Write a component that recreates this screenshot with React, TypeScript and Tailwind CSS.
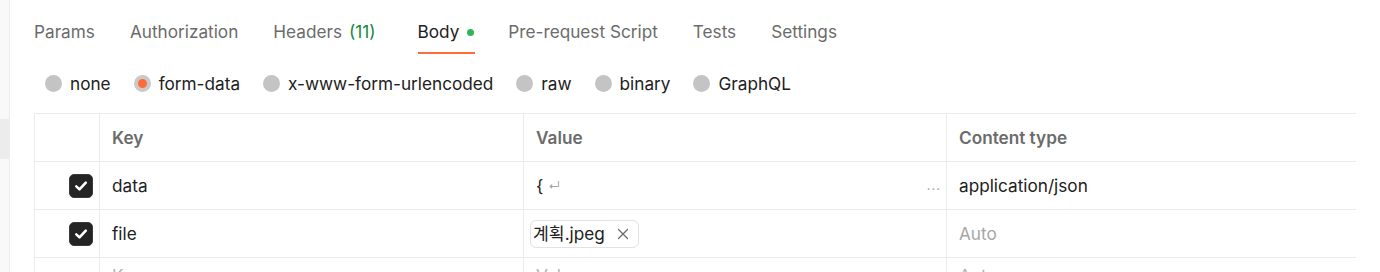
import React from "react";

const tabs = [
  { label: "Params" },
  { label: "Authorization" },
  { label: "Headers", count: "(11)" },
  { label: "Body", active: true },
  { label: "Pre-request Script" },
  { label: "Tests" },
  { label: "Settings" },
];

const radios = [
  { label: "none" },
  { label: "form-data", selected: true },
  { label: "x-www-form-urlencoded" },
  { label: "raw" },
  { label: "binary" },
  { label: "GraphQL" },
];

function Check() {
  return (
    <div className="w-[24px] h-[24px] rounded-[5px] bg-[#242424] border border-[#3a3a3a] flex items-center justify-center">
      <svg width="16" height="16" viewBox="0 0 16 16" fill="none">
        <path d="M3.3 8.4 L6.5 11.4 L12.8 4.7" stroke="white" strokeWidth="2.6" strokeLinecap="round" strokeLinejoin="round" />
      </svg>
    </div>
  );
}

export default function App() {
  const font = { fontFamily: "Inter, 'Noto Sans CJK KR', sans-serif" };
  return (
    <div className="w-[1380px] h-[272px] overflow-hidden bg-white flex text-[17.2px] text-[#212121]" style={font}>
      <div className="w-[10px] shrink-0 bg-[#f9f9f9] border-r border-[#ededed] flex flex-col">
        <div className="h-[119px] shrink-0" />
        <div className="h-[40px] shrink-0 bg-[#ececec]" />
      </div>
      <div className="flex-1 pl-[24px] flex flex-col">
        <div className="flex h-[54px] shrink-0 pt-[20px] gap-[35px]">
          {tabs.map((t) => (
            <div
              key={t.label}
              className={`h-[34px] flex items-start border-b-2 ${t.active ? "border-[#ff6c37] ml-[7px] mr-[-2px]" : "border-transparent"}`}
            >
              <span className={`leading-[24px] ${t.active ? "text-[#212121]" : "text-[#6b6b6b]"}`}>{t.label}</span>
              {t.count && <span className="leading-[24px] text-[#0c8a3c] ml-[7px]">{t.count}</span>}
              {t.active && <span className="w-[7px] h-[7px] rounded-full bg-[#33b35a] ml-[8px] mt-[9px] mr-[1px]" />}
            </div>
          ))}
        </div>
        <div className="flex h-[59px] shrink-0 items-center gap-[23px] pl-[11px]">
          {radios.map((r) => (
            <div key={r.label} className="flex items-center gap-[8px]">
              {r.selected ? (
                <span className="w-[17px] h-[17px] rounded-full bg-[#ff6c37] border-[4px] border-[#c9c9c9]" />
              ) : (
                <span className="w-[17px] h-[17px] rounded-full bg-[#c4c4c4]" />
              )}
              <span className="leading-[24px]">{r.label}</span>
            </div>
          ))}
        </div>
        <div className="w-[1322px] shrink-0 border-t border-l border-[#ebebeb] grid grid-cols-[65px_424px_423px_1fr]">
          {/* header */}
          <div className="h-[48px] border-r border-b border-[#ebebeb]" />
          <div className="h-[48px] border-r border-b border-[#ebebeb] pl-[12px] flex items-center font-semibold text-[#6b6b6b]">Key</div>
          <div className="h-[48px] border-r border-b border-[#ebebeb] pl-[12px] flex items-center font-semibold text-[#6b6b6b]">Value</div>
          <div className="h-[48px] border-b border-[#ebebeb] pl-[12px] flex items-center font-semibold text-[#6b6b6b]">Content type</div>
          {/* row 1 */}
          <div className="h-[48px] border-r border-b border-[#ebebeb] flex items-center justify-end pr-[6px]">
            <Check />
          </div>
          <div className="h-[48px] border-r border-b border-[#ebebeb] pl-[12px] flex items-center">data</div>
          <div className="h-[48px] border-r border-b border-[#ebebeb] pl-[12px] pr-[5px] flex items-center justify-between">
            <span className="flex items-center">
              <span>{"{"}</span>
              <span className="text-[12px] text-[#a6a6a6] ml-[5px] mt-[2px]">↵</span>
            </span>
            <span className="text-[13px] text-[#a6a6a6] tracking-[1px]">...</span>
          </div>
          <div className="h-[48px] border-b border-[#ebebeb] pl-[12px] flex items-center">application/json</div>
          {/* row 2 */}
          <div className="h-[48px] border-r border-b border-[#ebebeb] flex items-center justify-end pr-[6px]">
            <Check />
          </div>
          <div className="h-[48px] border-r border-b border-[#ebebeb] pl-[12px] flex items-center">file</div>
          <div className="h-[48px] border-r border-b border-[#ebebeb] pl-[6px] flex items-center">
            <div className="h-[28px] border border-[#e2e2e2] rounded-[6px] pl-[2px] pr-[9px] flex items-center gap-[12px]">
              <span>계획.jpeg</span>
              <svg width="12" height="12" viewBox="0 0 12 12">
                <path d="M1.5 1.5 L10.5 10.5 M10.5 1.5 L1.5 10.5" stroke="#6b6b6b" strokeWidth="1.3" strokeLinecap="round" />
              </svg>
            </div>
          </div>
          <div className="h-[48px] border-b border-[#ebebeb] pl-[12px] flex items-center text-[#a6a6a6]">Auto</div>
          {/* row 3 */}
          <div className="h-[48px] border-r border-[#ebebeb]" />
          <div className="h-[48px] border-r border-[#ebebeb] pl-[12px] pt-[6px] text-[#b3b3b3] leading-[24px]">Key</div>
          <div className="h-[48px] border-r border-[#ebebeb] pl-[12px] pt-[6px] text-[#b3b3b3] leading-[24px]">Value</div>
          <div className="h-[48px] pl-[12px] pt-[6px] text-[#b3b3b3] leading-[24px]">Auto</div>
        </div>
      </div>
    </div>
  );
}
